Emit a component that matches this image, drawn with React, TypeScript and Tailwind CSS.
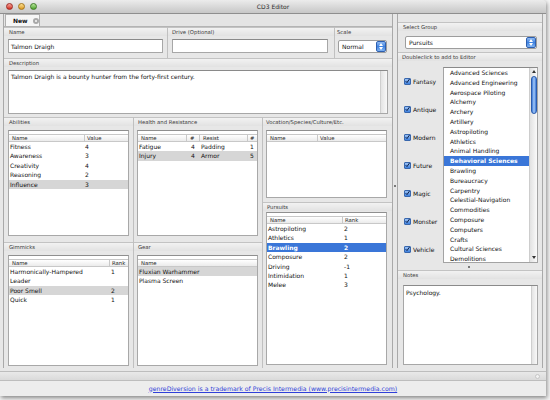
import React from 'react';

const abilities = [
    ['Fitness', '4'],
    ['Awareness', '3'],
    ['Creativity', '4'],
    ['Reasoning', '2'],
    ['Influence', '3'],
];
const health = [
    ['Fatigue', '4', 'Padding', '1'],
    ['Injury', '4', 'Armor', '5'],
];
const pursuits = [
    ['Astropiloting', '2'],
    ['Athletics', '1'],
    ['Brawling', '2'],
    ['Composure', '2'],
    ['Driving', '-1'],
    ['Intimidation', '1'],
    ['Melee', '3'],
];
const gimmicks = [
    ['Harmonically-Hampered', '1'],
    ['Leader', ''],
    ['Poor Smell', '2'],
    ['Quick', '1'],
];
const gear = [['Fluxian Warhammer'], ['Plasma Screen']];
const groups = ['Fantasy', 'Antique', 'Modern', 'Future', 'Magic', 'Monster', 'Vehicle'];
const skills = [
    'Advanced Sciences',
    'Advanced Engineering',
    'Aerospace Piloting',
    'Alchemy',
    'Archery',
    'Artillery',
    'Astropiloting',
    'Athletics',
    'Animal Handling',
    'Behavioral Sciences',
    'Brawling',
    'Bureaucracy',
    'Carpentry',
    'Celestial-Navigation',
    'Commodities',
    'Composure',
    'Computers',
    'Crafts',
    'Cultural Sciences',
    'Demolitions',
];

function Band({ label, className = '' }: { label: string; className?: string }) {
    return (
        <div className={`h-[9px] shrink-0 border-t border-[#c3c3c3] bg-gradient-to-b from-[#f2f2f2] to-[#e2e2e2] text-[5.3px] leading-[9px] text-[#3a3a3a] ${className}`}>
            {label}
        </div>
    );
}

interface TableProps {
    grid: string;
    cols: string[];
    head: string[];
    cells: string[];
    rows: string[][];
    sel: number;
    blue?: boolean;
}

function Table({ grid, cols, head, cells, rows, sel, blue }: TableProps) {
    return (
        <div className="min-h-0 flex-1 border border-[#a8a8a8] border-t-[#8f8f8f] bg-white pt-[3px]">
            <div className={`grid ${grid} h-[8px] border-y border-[#c8c8c8] bg-gradient-to-b from-white to-[#ebebeb] text-[5.3px] leading-[6px] text-[#222]`}>
                {cols.map((c, i) => (
                    <div key={c + i} className={`${head[i]} ${i > 0 ? 'border-l border-[#c8c8c8]' : ''}`}>
                        {c}
                    </div>
                ))}
            </div>
            {rows.map((r, i) => (
                <div
                    key={i}
                    className={`grid ${grid} h-[9.4px] text-[6px] leading-[9.4px] ${i === sel ? (blue ? 'bg-[#3a76d8] font-bold text-white' : 'bg-[#d6d6d6] text-[#111]') : 'text-[#111]'}`}
                >
                    {r.map((v, j) => (
                        <div key={j} className={`${cells[j]} whitespace-nowrap`}>
                            {v}
                        </div>
                    ))}
                </div>
            ))}
        </div>
    );
}

function Stepper() {
    return (
        <div className="flex w-[10px] shrink-0 flex-col items-center justify-center gap-[1px] rounded-[2px] border border-[#2d5fb0] bg-gradient-to-b from-[#8fbaf2] via-[#3f82e0] to-[#7fb2f0]">
            <svg width="4" height="3" viewBox="0 0 4 3"><path d="M0 3 L2 0 L4 3Z" fill="#fff" /></svg>
            <svg width="4" height="3" viewBox="0 0 4 3"><path d="M0 0 L2 3 L4 0Z" fill="#fff" /></svg>
        </div>
    );
}

function Check() {
    return (
        <div className="flex h-[7px] w-[7px] items-center justify-center rounded-[1px] border border-[#3867ad] bg-gradient-to-b from-[#9cc3f5] to-[#3c7fdc]">
            <svg width="6" height="6" viewBox="0 0 6 6">
                <path d="M0.8 3.2 L2.4 4.9 L5.4 0.6" fill="none" stroke="#0d1f45" strokeWidth="1.2" />
            </svg>
        </div>
    );
}

function Light({ from, to, ring }: { from: string; to: string; ring: string }) {
    return <div className={`h-[7px] w-[7px] rounded-full border ${ring} bg-gradient-to-b ${from} ${to}`} />;
}

export default function App() {
    return (
        <div className="relative h-[400px] w-[550px] overflow-hidden bg-[#f4f4f4] font-['DejaVu_Sans',sans-serif]">
            <div className="flex h-[396px] w-[546px] flex-col overflow-hidden rounded-t-[4px] bg-[#e7e7e7] shadow-[1px_2px_4px_rgba(0,0,0,0.45)]">
                {/* title bar */}
                <div className="relative flex h-[14px] shrink-0 items-center border-b border-[#8e8e8e] bg-gradient-to-b from-[#ececec] to-[#c7c7c7] pl-[6px]">
                    <div className="flex gap-[5px]">
                        <Light from="from-[#f7a19a]" to="to-[#d0261d]" ring="border-[#9c2b24]" />
                        <Light from="from-[#fbe08c]" to="to-[#dc9a16]" ring="border-[#a4741a]" />
                        <Light from="from-[#b7e79a]" to="to-[#4ea42a]" ring="border-[#3f7a26]" />
                    </div>
                    <div className="absolute inset-x-0 top-0 text-center text-[6px] leading-[13px] text-[#2c2c2c]">CD3 Editor</div>
                </div>

                <div className="flex h-[354px] shrink-0">
                    {/* left column */}
                    <div className="ml-[3px] flex w-[390px] flex-col border-x border-[#a9a9a9]">
                        <div className="flex h-[13px] shrink-0 items-end border-b border-[#b4b4b4] bg-[#e4e4e4] pl-[1px]">
                            <div className="flex h-[12px] w-[35px] shrink-0 items-center gap-[5px] border-x border-t border-[#b0b0b0] bg-[#f6f6f6] pl-[7px]">
                                <span className="text-[6px] font-bold text-[#111]">New</span>
                                <div className="flex h-[6px] w-[6px] shrink-0 items-center justify-center rounded-full bg-[#a9a9a9]">
                                    <svg width="4" height="4" viewBox="0 0 4 4">
                                        <path d="M1 1 L3 3 M3 1 L1 3" stroke="#f4f4f4" strokeWidth="0.8" />
                                    </svg>
                                </div>
                            </div>
                        </div>

                        {/* name / drive / scale */}
                        <div className="flex h-[31px] shrink-0">
                            <div className="flex w-[163px] flex-col">
                                <Band label="Name" className="pl-[5px]" />
                                <div className="px-[4px] pt-[3px]">
                                    <div className="h-[14px] border border-[#a7a7a7] border-t-[#8a8a8a] bg-white pl-[2px] text-[6px] leading-[13px] text-[#111]">Talmon Draigh</div>
                                </div>
                            </div>
                            <div className="flex w-[167px] flex-col border-l border-[#c0c0c0]">
                                <Band label="Drive (Optional)" className="pl-[4px]" />
                                <div className="pl-[4px] pr-[6px] pt-[3px]">
                                    <div className="h-[14px] border border-[#a7a7a7] border-t-[#8a8a8a] bg-white" />
                                </div>
                            </div>
                            <div className="flex flex-1 flex-col border-l border-[#c0c0c0]">
                                <Band label="Scale" className="pl-[2px]" />
                                <div className="pl-[3px] pr-[5px] pt-[4px]">
                                    <div className="flex h-[13px] rounded-[2px] border border-[#9d9d9d] bg-white">
                                        <div className="flex-1 pl-[3px] text-[6px] leading-[11px] text-[#111]">Normal</div>
                                        <Stepper />
                                    </div>
                                </div>
                            </div>
                        </div>

                        {/* description */}
                        <div className="flex h-[59px] shrink-0 flex-col">
                            <Band label="Description" className="pl-[5px]" />
                            <div className="px-[4px] pt-[3px]">
                                <div className="flex h-[44px] border border-[#a7a7a7] border-t-[#8a8a8a] bg-white">
                                    <div className="flex-1 pl-[2px] pt-[1px] text-[6px] leading-[9px] text-[#111]">
                                        Talmon Draigh is a bounty hunter from the forty-first century.
                                    </div>
                                    <div className="w-[7px] border-l border-[#cfcfcf] bg-gradient-to-r from-[#e4e4e4] to-[#f8f8f8]" />
                                </div>
                            </div>
                        </div>

                        {/* lower grid */}
                        <div className="grid min-h-0 flex-1 grid-cols-[129px_129px_1fr]">
                            <div className="flex flex-col">
                                <div className="flex h-[125px] shrink-0 flex-col">
                                    <Band label="Abilities" className="pl-[5px]" />
                                    <div className="flex min-h-0 flex-1 flex-col px-[4px] pb-[6px] pt-[4px]">
                                        <Table
                                            grid="grid-cols-[75px_1fr]"
                                            cols={['Name', 'Value']}
                                            head={['pl-[3px]', 'pl-[2px]']}
                                            cells={['pl-[1px]', 'pl-[1px]']}
                                            rows={abilities}
                                            sel={4}
                                        />
                                    </div>
                                </div>
                                <div className="flex min-h-0 flex-1 flex-col">
                                    <Band label="Gimmicks" className="pl-[5px]" />
                                    <div className="flex min-h-0 flex-1 flex-col px-[4px] pb-[2px] pt-[4px]">
                                        <Table
                                            grid="grid-cols-[100px_1fr]"
                                            cols={['Name', 'Rank']}
                                            head={['pl-[3px]', 'pl-[2px]']}
                                            cells={['pl-[1px]', 'pl-[2px]']}
                                            rows={gimmicks}
                                            sel={2}
                                        />
                                    </div>
                                </div>
                            </div>

                            <div className="flex flex-col border-l border-[#c0c0c0]">
                                <div className="flex h-[125px] shrink-0 flex-col">
                                    <Band label="Health and Resistance" className="pl-[4px]" />
                                    <div className="flex min-h-0 flex-1 flex-col pb-[6px] pl-[3px] pr-[4px] pt-[4px]">
                                        <Table
                                            grid="grid-cols-[48px_13px_48px_1fr]"
                                            cols={['Name', '#', 'Resist', '#']}
                                            head={['pl-[3px]', 'pl-[3px]', 'pl-[3px]', 'pl-[2px]']}
                                            cells={['pl-[1px]', 'pl-[5px]', 'pl-[2px]', 'pl-[3px]']}
                                            rows={health}
                                            sel={1}
                                        />
                                    </div>
                                </div>
                                <div className="flex min-h-0 flex-1 flex-col">
                                    <Band label="Gear" className="pl-[4px]" />
                                    <div className="flex min-h-0 flex-1 flex-col pb-[2px] pl-[3px] pr-[4px] pt-[4px]">
                                        <Table
                                            grid="grid-cols-[1fr]"
                                            cols={['Name']}
                                            head={['pl-[3px]']}
                                            cells={['pl-[1px]']}
                                            rows={gear}
                                            sel={0}
                                        />
                                    </div>
                                </div>
                            </div>

                            <div className="flex flex-col border-l border-[#c0c0c0]">
                                <div className="flex h-[85px] shrink-0 flex-col">
                                    <Band label="Vocation/Species/Culture/Etc." className="pl-[3px]" />
                                    <div className="flex min-h-0 flex-1 flex-col pb-[4px] pl-[3px] pr-[5px] pt-[4px]">
                                        <Table
                                            grid="grid-cols-[50px_1fr]"
                                            cols={['Name', 'Value']}
                                            head={['pl-[3px]', 'pl-[2px]']}
                                            cells={['pl-[1px]', 'pl-[1px]']}
                                            rows={[]}
                                            sel={-1}
                                        />
                                    </div>
                                </div>
                                <div className="flex min-h-0 flex-1 flex-col">
                                    <Band label="Pursuits" className="pl-[4px]" />
                                    <div className="flex min-h-0 flex-1 flex-col pb-[3px] pl-[3px] pr-[5px] pt-[1px]">
                                        <Table
                                            grid="grid-cols-[75px_1fr]"
                                            cols={['Name', 'Rank']}
                                            head={['pl-[3px]', 'pl-[2px]']}
                                            cells={['pl-[1px]', 'pl-[2px]']}
                                            rows={pursuits}
                                            sel={2}
                                            blue
                                        />
                                    </div>
                                </div>
                            </div>
                        </div>
                    </div>

                    {/* splitter */}
                    <div className="flex w-[4px] shrink-0 items-center justify-center">
                        <div className="mt-[-10px] h-[2px] w-[2px] rounded-full bg-[#555]" />
                    </div>

                    {/* right panel */}
                    <div className="flex w-[146px] shrink-0 flex-col border-x border-[#a9a9a9]">
                        <div className="h-[8px] shrink-0" />
                        <Band label="Select Group" className="pl-[5px]" />
                        <div className="h-[21px] shrink-0 pl-[7px] pr-[5px] pt-[5px]">
                            <div className="flex h-[13px] rounded-[2px] border border-[#9d9d9d] bg-white">
                                <div className="flex-1 pl-[3px] text-[6px] leading-[11px] text-[#111]">Pursuits</div>
                                <Stepper />
                            </div>
                        </div>
                        <Band label="Doubleclick to add to Editor" className="pl-[4px]" />
                        <div className="flex h-[205px] shrink-0 pl-[6px] pr-[4px] pt-[6px]">
                            <div className="flex h-[196px] w-[39px] flex-col justify-around">
                                {groups.map((g) => (
                                    <div key={g} className="flex items-center gap-[2px]">
                                        <Check />
                                        <span className="text-[6px] text-[#111]">{g}</span>
                                    </div>
                                ))}
                            </div>
                            <div className="flex h-[196px] flex-1 overflow-hidden border border-[#a3a3a3] border-t-[#8a8a8a] bg-white">
                                <div className="min-w-0 flex-1">
                                    {skills.map((s, i) => (
                                        <div
                                            key={s}
                                            className={`h-[9.8px] whitespace-nowrap pl-[6px] text-[6px] leading-[9.8px] ${i === 9 ? 'bg-[#3a76d8] font-bold text-white' : 'text-[#111]'}`}
                                        >
                                            {s}
                                        </div>
                                    ))}
                                </div>
                                <div className="flex w-[8px] flex-col items-center border-l border-[#cdcdcd] bg-gradient-to-r from-[#e2e2e2] to-[#fafafa]">
                                    <svg className="mt-[2px]" width="4" height="3" viewBox="0 0 4 3"><path d="M0 3 L2 0 L4 3Z" fill="#333" /></svg>
                                    <div className="mt-[3px] h-[38px] w-[6px] rounded-full border border-[#2a5cae] bg-gradient-to-r from-[#3b78d6] via-[#a6caf7] to-[#3b78d6]" />
                                    <div className="flex-1" />
                                    <svg className="mb-[3px]" width="4" height="3" viewBox="0 0 4 3"><path d="M0 0 L2 3 L4 0Z" fill="#333" /></svg>
                                </div>
                            </div>
                        </div>
                        <div className="flex h-[4px] shrink-0 items-start justify-center pr-[2px]">
                            <div className="h-[2px] w-[2px] rounded-full bg-[#555]" />
                        </div>
                        <Band label="Notes" className="pl-[5px]" />
                        <div className="flex min-h-0 flex-1 flex-col pb-[3px] pl-[5px] pr-[4px] pt-[6px]">
                            <div className="flex flex-1 border border-[#a7a7a7] border-t-[#8a8a8a] bg-white">
                                <div className="flex-1 pl-[2px] pt-[2px] text-[6px] leading-[9px] text-[#111]">Psychology.</div>
                                <div className="w-[6px] border-l border-[#cfcfcf] bg-gradient-to-r from-[#e4e4e4] to-[#f8f8f8]" />
                            </div>
                        </div>
                    </div>
                </div>

                {/* status strip */}
                <div className="h-[3px] shrink-0" />
                <div className="flex h-[10px] shrink-0 items-center justify-end border-y border-[#bdbdbd] bg-gradient-to-b from-[#e9e9e9] to-[#dadada] pr-[6px]">
                    <div className="h-[5px] w-[5px] rounded-full border border-[#c6c6c6] bg-[#f2f2f2]" />
                </div>
                <div className="flex flex-1 items-center justify-center bg-[#ededed] text-[6.2px] leading-[10px]">
                    <span className="text-[#2f3fd8] underline">genreDiversion is a trademark of Precis Intermedia (www.precisintermedia.com)</span>
                </div>
            </div>
        </div>
    );
}
